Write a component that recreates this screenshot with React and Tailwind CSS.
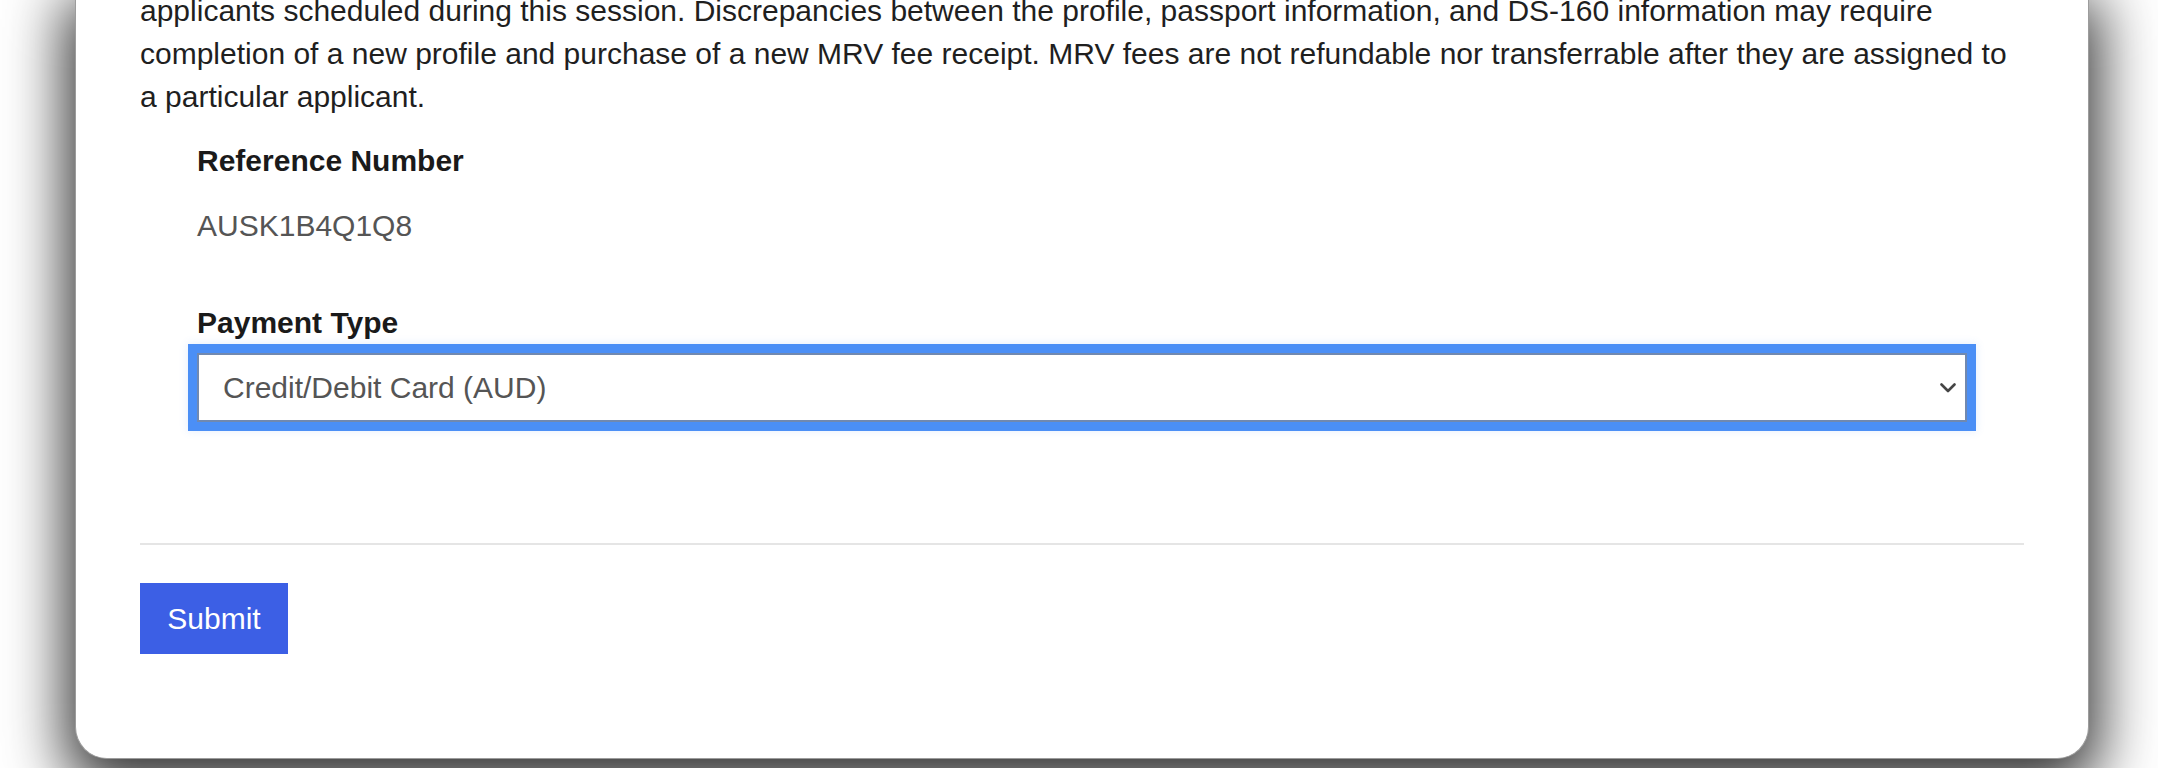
import React from 'react';

const ChevronDown = () => (
  <svg width="16" height="10" viewBox="0 0 16 10" fill="none">
    <path d="M1.5 1.5 L8 8 L14.5 1.5" stroke="#454545" strokeWidth="2.6" strokeLinecap="round" strokeLinejoin="round" />
  </svg>
);

const App = () => {
  const noticeLines = [
    'applicants scheduled during this session. Discrepancies between the profile, passport information, and DS-160 information may require',
    'completion of a new profile and purchase of a new MRV fee receipt. MRV fees are not refundable nor transferrable after they are assigned to',
    'a particular applicant.'
  ];

  return (
    <div className="h-[768px] overflow-hidden bg-white pl-[75px] pr-[69px] font-['Liberation_Sans',Arial,sans-serif]">
      <div className="-mt-[11px] bg-white border border-t-0 border-[#9c9c9c] rounded-b-[32px] px-16 pb-[104px] shadow-[0_20px_60px_10px_rgba(0,0,0,0.8)]">
        <p className="text-[30px] leading-[43px] text-[#1f1f1f] whitespace-nowrap">
          {noticeLines.map((line, index) => (
            <span key={index} className="block">{line}</span>
          ))}
        </p>

        <div className="px-[57px]">
          <div className="mt-[25px] text-[30px] leading-[36px] font-bold text-[#1a1a1a]">Reference Number</div>
          <div className="mt-[29px] text-[30px] leading-[36px] text-[#555555]">AUSK1B4Q1Q8</div>

          <label className="block mt-[61px] text-[30px] leading-[36px] font-bold text-[#1a1a1a]">Payment Type</label>
          <div className="relative mt-[12px]">
            <select
              defaultValue="card"
              className="block w-full h-[69px] appearance-none bg-white border-2 border-[#7189b0] pl-[24px] pr-[40px] text-[30px] text-[#555555] outline-none shadow-[0_0_0_9px_#4b8ff6,0_0_8px_10px_rgba(75,143,246,0.12)] font-['Liberation_Sans',Arial,sans-serif]"
            >
              <option value="card">Credit/Debit Card (AUD)</option>
            </select>
            <span className="pointer-events-none absolute right-[11px] top-1/2 -translate-y-1/2 flex">
              <ChevronDown />
            </span>
          </div>
        </div>

        <div className="mt-[121px] h-[2px] bg-[#e5e5e5]" />

        <button className="mt-[38px] w-[148px] h-[71px] bg-[#3c5fe5] text-white text-[30px] leading-none">
          Submit
        </button>
      </div>
    </div>
  );
};

export default App;
